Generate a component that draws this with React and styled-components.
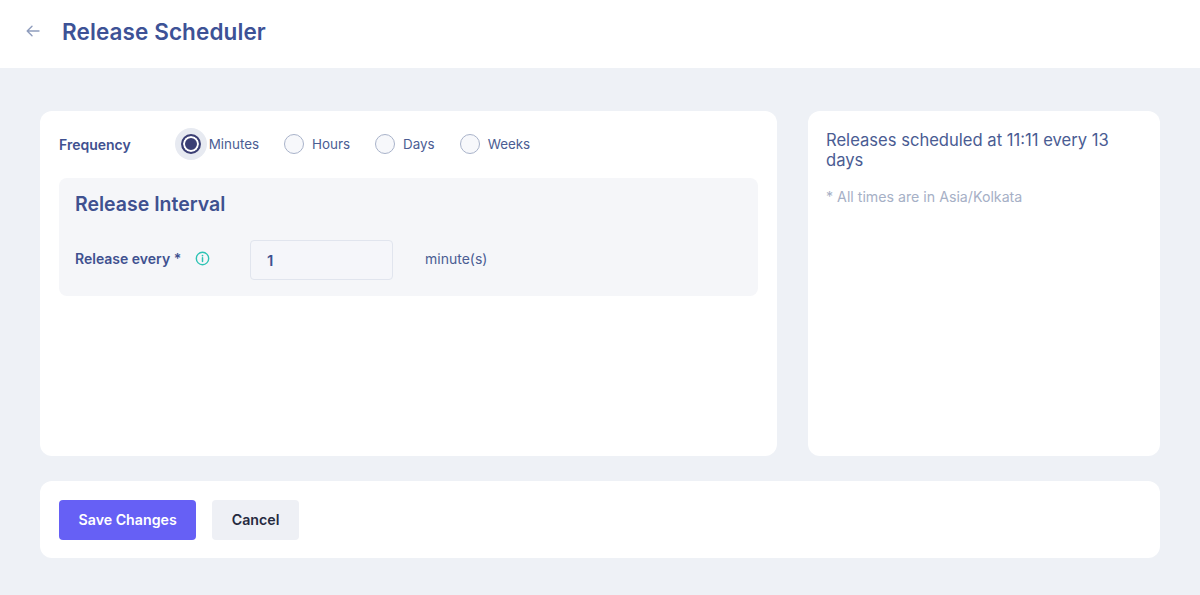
import React, { useState } from "react"
import styled, { createGlobalStyle } from "styled-components"

const GlobalStyle = createGlobalStyle`
  * { box-sizing: border-box; }
  body {
    margin: 0;
    font-family: Inter, "Noto Sans", sans-serif;
    background: #eef1f6;
    color: #3f5190;
  }
`

const options = ["Minutes", "Hours", "Days", "Weeks"]

export default function App() {
  const [freq, setFreq] = useState("Minutes")
  const [every, setEvery] = useState("1")

  return (
    <>
      <GlobalStyle />
      <Header>
        <BackButton aria-label="Back">
          <svg width="16" height="16" viewBox="0 0 16 16" fill="none">
            <path d="M14 8H2.5M7 3.2L2.2 8 7 12.8" stroke="#8f9dbd" strokeWidth="1.4" strokeLinecap="round" strokeLinejoin="round" />
          </svg>
        </BackButton>
        <Title>Release Scheduler</Title>
      </Header>

      <Main>
        <Columns>
          <Card>
            <FreqRow>
              <FieldLabel>Frequency</FieldLabel>
              <RadioGroup>
                {options.map((o) => (
                  <RadioOption key={o} onClick={() => setFreq(o)}>
                    <Halo $active={freq === o}>
                      <RadioCircle $active={freq === o} />
                    </Halo>
                    <RadioText>{o}</RadioText>
                  </RadioOption>
                ))}
              </RadioGroup>
            </FreqRow>

            <IntervalBox>
              <BoxTitle>Release Interval</BoxTitle>
              <IntervalRow>
                <LabelGroup>
                  <FieldLabel>Release every *</FieldLabel>
                  <svg width="15" height="15" viewBox="0 0 16 16" fill="none">
                    <circle cx="8" cy="8" r="6.6" stroke="#2cc3b4" strokeWidth="1.5" />
                    <path d="M8 7.2v4" stroke="#2cc3b4" strokeWidth="1.6" strokeLinecap="round" />
                    <circle cx="8" cy="4.9" r="0.95" fill="#2cc3b4" />
                  </svg>
                </LabelGroup>
                <NumberInput value={every} onChange={(e) => setEvery(e.target.value)} />
                <Unit>minute(s)</Unit>
              </IntervalRow>
            </IntervalBox>
          </Card>

          <SideCard>
            <Summary>Releases scheduled at 11:11 every 13 days</Summary>
            <Note>* All times are in Asia/Kolkata</Note>
          </SideCard>
        </Columns>

        <ActionCard>
          <PrimaryButton>Save Changes</PrimaryButton>
          <SecondaryButton>Cancel</SecondaryButton>
        </ActionCard>
      </Main>
    </>
  )
}

const Header = styled.header`
  height: 68px;
  background: #ffffff;
  display: flex;
  align-items: center;
  padding: 0 0 6px 24px;
`

const BackButton = styled.button`
  border: none;
  background: none;
  padding: 0;
  width: 18px;
  height: 18px;
  display: flex;
  align-items: center;
  justify-content: center;
  margin-right: 20px;
  cursor: pointer;
`

const Title = styled.h1`
  margin: 0;
  font-size: 22.5px;
  font-weight: 600;
  color: #3d5296;
  letter-spacing: 0.1px;
`

const Main = styled.main`
  padding: 43px 40px 36px;
  display: flex;
  flex-direction: column;
  gap: 25px;
`

const Columns = styled.div`
  display: grid;
  grid-template-columns: 737px 352px;
  gap: 31px;
`

const Card = styled.section`
  background: #ffffff;
  border-radius: 12px;
  height: 345px;
  padding: 17px 19px;
`

const SideCard = styled(Card)`
  padding: 19px 18px;
`

const FreqRow = styled.div`
  display: flex;
  align-items: center;
  height: 32px;
`

const FieldLabel = styled.span`
  font-size: 14px;
  font-weight: 600;
  color: #3f5190;
`

const RadioGroup = styled.div`
  display: flex;
  align-items: center;
  margin-left: 50px;
  gap: 25px;
`

const RadioOption = styled.label`
  display: flex;
  align-items: center;
  cursor: pointer;
`

const Halo = styled.span`
  width: 32px;
  height: 32px;
  border-radius: 50%;
  display: flex;
  align-items: center;
  justify-content: center;
  background: ${(p) => (p.$active ? "#e7eaf1" : "transparent")};
  margin: 0 2px 0 -6px;
`

const RadioCircle = styled.span`
  width: 20px;
  height: 20px;
  border-radius: 50%;
  border: ${(p) => (p.$active ? "2px solid #3b3f74" : "1px solid #a9b3ca")};
  box-shadow: ${(p) => (p.$active ? "inset 0 0 0 2px #ffffff" : "none")};
  background: ${(p) => (p.$active ? "#3b3f74" : "#f7f8fb")};
`

const RadioText = styled.span`
  font-size: 13.4px;
  color: #4b5d93;
`

const IntervalBox = styled.div`
  margin-top: 18px;
  background: #f5f6f9;
  border-radius: 8px;
  padding: 14px 16px 16px;
`

const BoxTitle = styled.h2`
  margin: 0;
  font-size: 19.5px;
  font-weight: 600;
  line-height: 24px;
  color: #3f5190;
`

const IntervalRow = styled.div`
  display: flex;
  align-items: center;
  margin-top: 24px;
`

const LabelGroup = styled.div`
  width: 175px;
  display: flex;
  align-items: center;
  gap: 14px;
  margin-top: -4px;
`

const NumberInput = styled.input`
  width: 143px;
  height: 40px;
  border: 1px solid #e1e5ee;
  border-radius: 4px;
  background: #f5f6fa;
  padding: 0 16px;
  font-family: inherit;
  font-size: 15px;
  font-weight: 600;
  color: #3f5190;
  outline: none;
`

const Unit = styled.span`
  margin: -4px 0 0 32px;
  font-size: 14px;
  color: #4b5d93;
`

const Summary = styled.p`
  margin: 0;
  font-size: 16.6px;
  line-height: 20px;
  color: #4a5c93;
  max-width: 300px;
`

const Note = styled.p`
  margin: 18px 0 0;
  font-size: 14.2px;
  color: #a6b0c6;
`

const ActionCard = styled.section`
  background: #ffffff;
  border-radius: 12px;
  height: 77px;
  padding: 0 19px;
  display: flex;
  align-items: center;
  gap: 16px;
`

const PrimaryButton = styled.button`
  height: 40px;
  padding: 0 19.5px;
  border: none;
  border-radius: 4px;
  background: #6660f5;
  color: #ffffff;
  font-family: inherit;
  font-size: 14.2px;
  font-weight: 600;
  cursor: pointer;
`

const SecondaryButton = styled(PrimaryButton)`
  background: #eef0f5;
  color: #252a40;
`
